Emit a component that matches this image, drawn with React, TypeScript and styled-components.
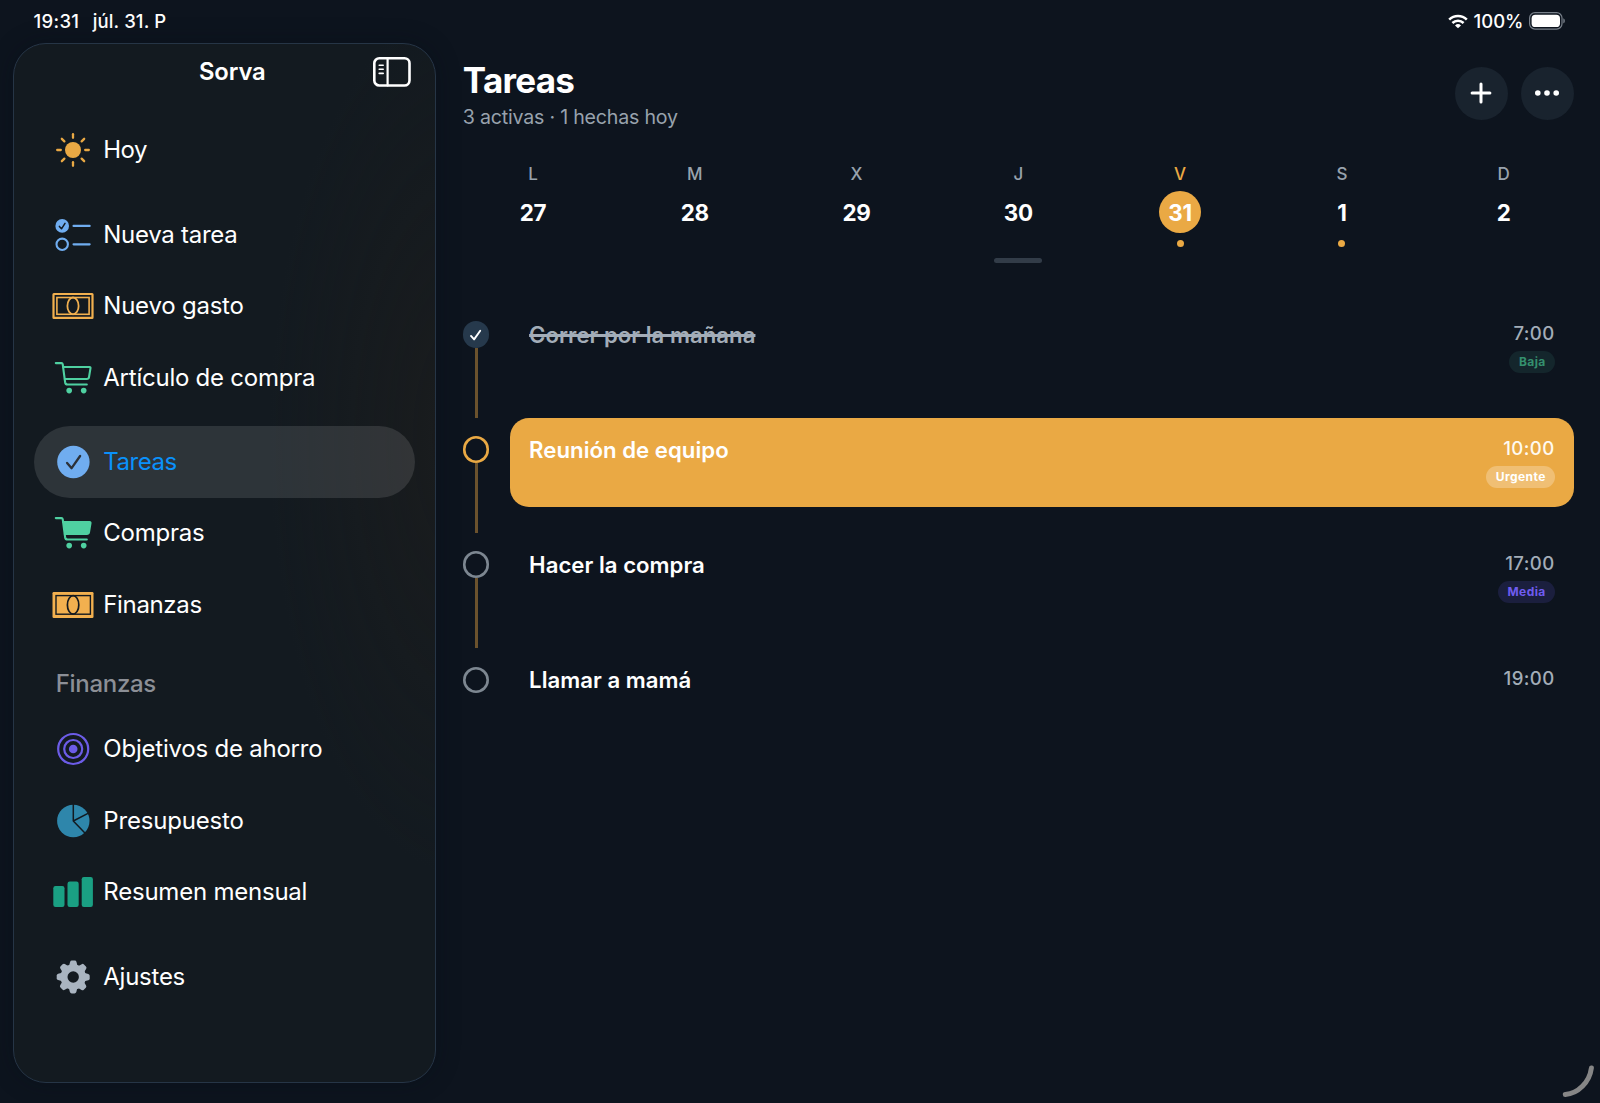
import React from "react";
import styled, { createGlobalStyle } from "styled-components";

const color = {
  page: "#0d141e",
  panel: "#131a20",
  white: "#ffffff",
  muted: "#a3adb8",
  amber: "#eaa944",
  gold: "#f2b04f",
  blue: "#70adf0",
  mint: "#4fd1a1",
  violet: "#6c5ce7",
  teal: "#2e86ab",
  green: "#1aa083",
  grey: "#a9b4c0",
};

const GlobalStyle = createGlobalStyle`
  * { box-sizing: border-box; }
  html, body { margin: 0; padding: 0; background: ${color.page}; }
  body {
    font-family: Inter, "Liberation Sans", sans-serif;
    color: ${color.white};
    overflow: hidden;
  }
  button { font: inherit; color: inherit; border: 0; padding: 0; background: none; }
  svg { display: block; flex: none; }
`;

const Screen = styled.div`
  position: relative;
  width: 1600px;
  height: 1103px;
  display: flex;
  flex-direction: column;
  background: ${color.page};
  overflow: hidden;
`;

const StatusBar = styled.header`
  flex: none;
  height: 42.5px;
  padding: 0 34px 0 33.4px;
  display: flex;
  align-items: center;
  justify-content: space-between;
  font-size: 18.5px;
  font-weight: 500;
  line-height: 42px;
`;

const StatusGroup = styled.div<{ $gap: number }>`
  display: flex;
  align-items: center;
  gap: ${(p) => p.$gap}px;
`;

const StatusText = styled.span<{ $track?: number }>`
  letter-spacing: ${(p) => p.$track ?? 0}px;
  white-space: nowrap;
`;

const Body = styled.div`
  flex: 1;
  display: flex;
  min-height: 0;
`;

const Sidebar = styled.aside`
  flex: none;
  width: 423px;
  height: 1040.5px;
  margin-left: 13.3px;
  padding: 0 20px;
  border: 1.3px solid #263546;
  border-radius: 33px;
  background:
    radial-gradient(ellipse 200px 440px at 108% 38%, rgba(36, 30, 24, 0.4), rgba(36, 30, 30, 0) 100%),
    ${color.panel};
  box-shadow: 0 0 24px rgba(6, 14, 22, 0.3);
`;

const SidebarHeader = styled.div`
  height: 71px;
  display: grid;
  grid-template-columns: 1fr auto 1fr;
  align-items: start;
  padding: 12.5px 3px 0 18px;
`;

const AppName = styled.h2`
  grid-column: 2;
  margin: 1px 0 0;
  font-size: 23.8px;
  font-weight: 600;
  line-height: 29px;
  letter-spacing: -0.1px;
`;

const ToggleButton = styled.button`
  grid-column: 3;
  justify-self: end;
`;

const NavGroup = styled.nav`
  display: flex;
  flex-direction: column;
  margin-bottom: 13.3px;
`;

const NavItem = styled.a<{ $active?: boolean }>`
  height: 71.35px;
  display: flex;
  align-items: center;
  padding-left: 17.4px;
  gap: 9.6px;
  border-radius: 36px;
  color: ${(p) => (p.$active ? "#0a91fb" : color.white)};
  background: ${(p) => (p.$active ? "rgba(255, 255, 255, 0.115)" : "transparent")};
`;

const NavLabel = styled.span<{ $track: number }>`
  font-size: 24px;
  line-height: 30px;
  font-weight: 400;
  letter-spacing: ${(p) => p.$track}px;
  white-space: nowrap;
`;

const SectionTitle = styled.h3`
  margin: -13.3px 0 0;
  height: 73px;
  padding: 28.4px 0 0 21.4px;
  font-size: 24px;
  line-height: 30px;
  font-weight: 500;
  letter-spacing: -0.3px;
  color: #8c8f96;
`;

const Main = styled.main`
  flex: 1;
  min-width: 0;
  padding: 0 26.3px 0 26.5px;
`;

const PageHeader = styled.div`
  height: 117px;
  display: flex;
  justify-content: space-between;
`;

const Title = styled.h1`
  margin: 16.3px 0 0;
  font-size: 35px;
  line-height: 42px;
  font-weight: 700;
  letter-spacing: -0.7px;
`;

const Subtitle = styled.p`
  margin: 4px 0 0;
  font-size: 19.6px;
  line-height: 25px;
  letter-spacing: -0.21px;
  color: #98a2ad;
`;

const Actions = styled.div`
  display: flex;
  gap: 13.2px;
  padding-top: 24.2px;
`;

const RoundButton = styled.button`
  width: 53px;
  height: 53px;
  border-radius: 50%;
  background: #19232e;
  display: grid;
  place-items: center;
`;

const Week = styled.section`
  margin: 0 -10.9px 0 -10.7px;
  display: grid;
  grid-template-columns: repeat(7, 1fr);
`;

const Day = styled.div`
  display: flex;
  flex-direction: column;
  align-items: center;
`;

const DayName = styled.span<{ $active?: boolean }>`
  height: 31.4px;
  padding-top: 3.8px;
  font-size: 17px;
  line-height: 22px;
  font-weight: 500;
  color: ${(p) => (p.$active ? color.amber : "#98a2ad")};
`;

const DayNumber = styled.span<{ $active?: boolean }>`
  width: 42.5px;
  height: 42.5px;
  border-radius: 50%;
  display: grid;
  place-items: center;
  font-size: 22.4px;
  font-weight: 700;
  letter-spacing: -0.2px;
  background: ${(p) => (p.$active ? color.amber : "transparent")};
`;

const DayDot = styled.i<{ $on?: boolean }>`
  margin-top: 6.5px;
  width: 7px;
  height: 7px;
  border-radius: 50%;
  background: ${(p) => (p.$on ? color.amber : "transparent")};
`;

const Handle = styled.div`
  width: 48px;
  height: 5.4px;
  margin: 11.2px auto 39.6px;
  border-radius: 3px;
  background: #323c48;
`;

const TaskList = styled.ul`
  list-style: none;
  margin: 0;
  padding: 0;
`;

const TaskRow = styled.li`
  height: 115.05px;
  display: flex;
  gap: 21px;
`;

const Rail = styled.div`
  width: 26.5px;
  padding-top: 18.3px;
  display: flex;
  flex-direction: column;
  align-items: center;
`;

const Bullet = styled.span<{ $tone: "done" | "current" | "open" }>`
  flex: none;
  width: 26.5px;
  height: 26.5px;
  border-radius: 50%;
  display: grid;
  place-items: center;
  box-shadow: ${(p) =>
    p.$tone === "done" ? "none" : `inset 0 0 0 2.6px ${p.$tone === "current" ? color.amber : "#7d8791"}`};
  background: ${(p) => (p.$tone === "done" ? "#26394c" : "transparent")};
`;

const Connector = styled.span`
  flex: 1;
  width: 3px;
  background: #6b522d;
`;

const TaskCard = styled.article<{ $active?: boolean }>`
  flex: 1;
  height: 88.6px;
  padding: 0 19px 0 18.8px;
  border-radius: 19px;
  display: flex;
  justify-content: space-between;
  background: ${(p) => (p.$active ? color.amber : "transparent")};
`;

const TaskTitle = styled.h4<{ $done?: boolean }>`
  margin: 16.8px 0 0;
  height: 29px;
  font-size: 22.2px;
  line-height: 29px;
  font-weight: 600;
  letter-spacing: 0.02px;
  color: ${(p) => (p.$done ? color.muted : color.white)};
  text-decoration: ${(p) => (p.$done ? "line-through" : "none")};
  text-decoration-thickness: 2.7px;
`;

const TaskMeta = styled.div`
  display: flex;
  flex-direction: column;
  align-items: flex-end;
  padding-top: 18.8px;
`;

const Time = styled.time<{ $active?: boolean }>`
  font-size: 18.6px;
  line-height: 23px;
  font-weight: 500;
  letter-spacing: 0.42px;
  color: ${(p) => (p.$active ? "#fffaf0" : color.muted)};
`;

const badgeTone = {
  low: ["#34906e", "#14262c"],
  urgent: ["#ffffff", "#f0bf74"],
  medium: ["#6f5cf0", "#1b1f3e"],
};

const Badge = styled.span<{ $tone: keyof typeof badgeTone }>`
  margin-top: 6px;
  height: 22.2px;
  padding: 0 9px 0 9.5px;
  border-radius: 11px;
  font-size: 12px;
  line-height: 22px;
  font-weight: 700;
  letter-spacing: 0.42px;
  color: ${(p) => badgeTone[p.$tone][0]};
  background: ${(p) => badgeTone[p.$tone][1]};
`;

const CornerMark = styled.svg`
  position: absolute;
  right: 0;
  bottom: 0;
`;

/* Sidebar glyphs share a 42×36 canvas centred on (21, 18). */
const Glyph = ({ children }: { children: React.ReactNode }) => (
  <svg width="42" height="36" viewBox="0 0 42 36" fill="none" strokeLinecap="round" strokeLinejoin="round">
    {children}
  </svg>
);

const SunIcon = () => (
  <Glyph>
    <circle cx="21" cy="18" r="8" fill={color.amber} />
    <g stroke={color.amber} strokeWidth="2.3">
      {[0, 45, 90, 135, 180, 225, 270, 315].map((a) => (
        <path key={a} d="M21 5.8V2.2" transform={`rotate(${a} 21 18)`} />
      ))}
    </g>
  </Glyph>
);

const ChecklistIcon = () => (
  <Glyph>
    <circle cx="10.2" cy="8.9" r="6.8" fill={color.blue} />
    <path d="M7.4 9.4L9.5 11.8L13 6.3" stroke={color.panel} strokeWidth="1.5" />
    <circle cx="10.2" cy="27.3" r="5.7" stroke={color.blue} strokeWidth="2.1" />
    <path d="M21.6 8.9H37.6M21.6 27.3H37.6" stroke={color.blue} strokeWidth="2.3" />
  </Glyph>
);

const BanknoteIcon = ({ filled }: { filled?: boolean }) =>
  filled ? (
    <Glyph>
      <rect x="0.5" y="5" width="41" height="26" rx="1.2" fill={color.gold} />
      <g stroke="#151a1f" strokeWidth="1.4" strokeLinejoin="miter">
        <rect x="4" y="8.6" width="34.4" height="18.6" />
        <ellipse cx="21.1" cy="17.9" rx="5.7" ry="9.2" strokeWidth="1.7" />
      </g>
    </Glyph>
  ) : (
    <Glyph>
      <g stroke={color.gold} strokeLinejoin="miter">
        <rect x="1.5" y="6" width="39" height="23.8" rx="0.4" strokeWidth="2.2" />
        <rect x="4.9" y="9.5" width="32.2" height="16.8" strokeWidth="1.6" />
        <ellipse cx="21" cy="17.9" rx="5.6" ry="8.4" strokeWidth="1.8" />
      </g>
    </Glyph>
  );

const CartIcon = ({ filled }: { filled?: boolean }) => (
  <Glyph>
    <path
      d="M3.8 3.1H9.5Q10.5 3.1 10.7 4.1L13.1 22.2Q13.5 24.5 15.6 24.5H34.8"
      stroke={color.mint}
      strokeWidth="2.1"
    />
    <path
      d="M11.2 7H37.6Q38.7 7 38.5 8.2L37 17.2Q36.7 19 34.8 19H12.8"
      stroke={color.mint}
      strokeWidth="2.1"
      fill={filled ? color.mint : "none"}
    />
    <circle cx="17.2" cy="30.6" r="2.8" fill={color.mint} />
    <circle cx="31.7" cy="30.6" r="2.8" fill={color.mint} />
  </Glyph>
);

const CheckCircleIcon = () => (
  <Glyph>
    <circle cx="21.4" cy="18" r="16.2" fill={color.blue} />
    <path d="M15.1 18.9L19.6 24.2L28.1 12" stroke="#2c3138" strokeWidth="2.3" />
  </Glyph>
);

const TargetIcon = () => (
  <Glyph>
    <g stroke={color.violet} strokeWidth="2.2">
      <circle cx="21.2" cy="18" r="15" />
      <circle cx="21.2" cy="18" r="9" />
    </g>
    <circle cx="21.2" cy="18" r="4.3" fill={color.violet} />
  </Glyph>
);

const PieIcon = () => (
  <Glyph>
    <circle cx="21.3" cy="18" r="16.2" fill={color.teal} />
    <path
      d="M21.3 0.5V18L33.4 30.6M21.3 18L37.4 9.6"
      stroke={color.panel}
      strokeWidth="1.5"
      strokeLinecap="butt"
    />
  </Glyph>
);

const BarsIcon = () => (
  <Glyph>
    <g fill={color.green}>
      <rect x="1.3" y="12" width="11.2" height="21" rx="2.2" />
      <rect x="15.5" y="7.5" width="11.2" height="25.5" rx="2.2" />
      <rect x="29.7" y="3" width="11.2" height="30" rx="2.2" />
    </g>
  </Glyph>
);

const GearIcon = () => (
  <Glyph>
    <g fill={color.grey}>
      {[0, 45, 90, 135, 180, 225, 270, 315].map((a) => (
        <path
          key={a}
          d="M16.8 8L18.1 2.9Q18.5 1.5 19.9 1.5H22.7Q24.1 1.5 24.5 2.9L25.8 8Z"
          transform={`rotate(${a} 21.2 18)`}
        />
      ))}
    </g>
    <circle cx="21.2" cy="18" r="9.2" stroke={color.grey} strokeWidth="7" />
  </Glyph>
);

const SidebarToggleIcon = () => (
  <svg width="40" height="32" viewBox="0 0 40 32" fill="none" stroke="#fff" strokeLinecap="round">
    <rect x="2.3" y="2.3" width="35.2" height="27.2" rx="5" strokeWidth="2.6" />
    <path d="M15.6 2.3V29.5" strokeWidth="2.2" />
    <path d="M7.2 9.2H11.2M7.2 13.3H11.2M7.2 17.4H11.2" strokeWidth="1.6" />
  </svg>
);

const WifiIcon = () => (
  <svg width="20" height="15" viewBox="0 0 20 15" fill="none" stroke="#fff">
    <path d="M1.2 5.6A12.6 12.6 0 0 1 18.8 5.6" strokeWidth="2.6" />
    <path d="M4.4 9A8 8 0 0 1 15.6 9" strokeWidth="2.5" />
    <path d="M10 14.2L7 11.4A4.4 4.4 0 0 1 13 11.4Z" fill="#fff" stroke="none" />
  </svg>
);

const BatteryIcon = () => (
  <svg width="37" height="18" viewBox="0 0 37 18">
    <rect x="0.6" y="0.7" width="32.4" height="16.4" rx="5.4" fill="none" stroke="#78808a" strokeWidth="1.2" />
    <rect x="2.6" y="2.7" width="28.4" height="12.4" rx="3.7" fill="#fff" />
    <path d="M34.3 6.2Q35.9 7 35.9 8.9T34.3 11.6Z" fill="#78808a" />
  </svg>
);

const PlusIcon = () => (
  <svg width="24" height="24" viewBox="0 0 24 24" stroke="#fff" strokeWidth="3" strokeLinecap="round">
    <path d="M12 3.1V20.9M3.1 12H20.9" />
  </svg>
);

const MoreIcon = () => (
  <svg width="26" height="8" viewBox="0 0 26 8" fill="#fff">
    <circle cx="3.8" cy="4" r="2.8" />
    <circle cx="13" cy="4" r="2.8" />
    <circle cx="22.2" cy="4" r="2.8" />
  </svg>
);

const DoneIcon = () => (
  <svg width="14" height="14" viewBox="0 0 14 14" fill="none" stroke="#fff" strokeWidth="1.9" strokeLinecap="round" strokeLinejoin="round">
    <path d="M2 7.9L5.1 11.4L11.2 2.7" />
  </svg>
);

type Entry = { label: string; icon: React.ReactNode; track: number; active?: boolean };

const shortcuts: Entry[] = [
  { label: "Nueva tarea", icon: <ChecklistIcon />, track: -0.28 },
  { label: "Nuevo gasto", icon: <BanknoteIcon />, track: -0.22 },
  { label: "Artículo de compra", icon: <CartIcon />, track: -0.24 },
];

const sections: Entry[] = [
  { label: "Tareas", icon: <CheckCircleIcon />, track: -0.45, active: true },
  { label: "Compras", icon: <CartIcon filled />, track: -0.25 },
  { label: "Finanzas", icon: <BanknoteIcon filled />, track: -0.35 },
];

const finance: Entry[] = [
  { label: "Objetivos de ahorro", icon: <TargetIcon />, track: -0.22 },
  { label: "Presupuesto", icon: <PieIcon />, track: -0.18 },
  { label: "Resumen mensual", icon: <BarsIcon />, track: -0.22 },
];

const Nav = ({ items }: { items: Entry[] }) => (
  <NavGroup>
    {items.map((it) => (
      <NavItem key={it.label} $active={it.active}>
        {it.icon}
        <NavLabel $track={it.track}>{it.label}</NavLabel>
      </NavItem>
    ))}
  </NavGroup>
);

const days = [
  { name: "L", num: 27 },
  { name: "M", num: 28 },
  { name: "X", num: 29 },
  { name: "J", num: 30 },
  { name: "V", num: 31, active: true, dot: true },
  { name: "S", num: 1, dot: true },
  { name: "D", num: 2 },
];

type Task = {
  title: string;
  time: string;
  tone: "done" | "current" | "open";
  badge?: { label: string; tone: keyof typeof badgeTone };
};

const tasks: Task[] = [
  { title: "Correr por la mañana", time: "7:00", tone: "done", badge: { label: "Baja", tone: "low" } },
  { title: "Reunión de equipo", time: "10:00", tone: "current", badge: { label: "Urgente", tone: "urgent" } },
  { title: "Hacer la compra", time: "17:00", tone: "open", badge: { label: "Media", tone: "medium" } },
  { title: "Llamar a mamá", time: "19:00", tone: "open" },
];

export default function App() {
  return (
    <Screen>
      <GlobalStyle />
      <StatusBar>
        <StatusGroup $gap={13.5}>
          <StatusText $track={0.35}>19:31</StatusText>
          <StatusText $track={0.1}>júl. 31. P</StatusText>
        </StatusGroup>
        <StatusGroup $gap={5.5}>
          <WifiIcon />
          <StatusText>100%</StatusText>
          <BatteryIcon />
        </StatusGroup>
      </StatusBar>
      <Body>
        <Sidebar>
          <SidebarHeader>
            <AppName>Sorva</AppName>
            <ToggleButton aria-label="Barra lateral">
              <SidebarToggleIcon />
            </ToggleButton>
          </SidebarHeader>
          <Nav items={[{ label: "Hoy", icon: <SunIcon />, track: -0.5 }]} />
          <Nav items={shortcuts} />
          <Nav items={sections} />
          <SectionTitle>Finanzas</SectionTitle>
          <Nav items={finance} />
          <Nav items={[{ label: "Ajustes", icon: <GearIcon />, track: -0.25 }]} />
        </Sidebar>
        <Main>
          <PageHeader>
            <div>
              <Title>Tareas</Title>
              <Subtitle>3 activas · 1 hechas hoy</Subtitle>
            </div>
            <Actions>
              <RoundButton aria-label="Añadir">
                <PlusIcon />
              </RoundButton>
              <RoundButton aria-label="Más">
                <MoreIcon />
              </RoundButton>
            </Actions>
          </PageHeader>
          <Week>
            {days.map((d) => (
              <Day key={d.num}>
                <DayName $active={d.active}>{d.name}</DayName>
                <DayNumber $active={d.active}>{d.num}</DayNumber>
                <DayDot $on={d.dot} />
              </Day>
            ))}
          </Week>
          <Handle />
          <TaskList>
            {tasks.map((t, i) => (
              <TaskRow key={t.title}>
                <Rail>
                  <Bullet $tone={t.tone}>{t.tone === "done" && <DoneIcon />}</Bullet>
                  {i < tasks.length - 1 && <Connector />}
                </Rail>
                <TaskCard $active={t.tone === "current"}>
                  <TaskTitle $done={t.tone === "done"}>{t.title}</TaskTitle>
                  <TaskMeta>
                    <Time $active={t.tone === "current"}>{t.time}</Time>
                    {t.badge && <Badge $tone={t.badge.tone}>{t.badge.label}</Badge>}
                  </TaskMeta>
                </TaskCard>
              </TaskRow>
            ))}
          </TaskList>
        </Main>
      </Body>
      <CornerMark width="40" height="40" viewBox="0 0 40 40" fill="none">
        <path d="M5.3 31.6C18 30.5 29.5 19.5 31.4 5" stroke="#868686" strokeWidth="5" strokeLinecap="round" />
      </CornerMark>
    </Screen>
  );
}
